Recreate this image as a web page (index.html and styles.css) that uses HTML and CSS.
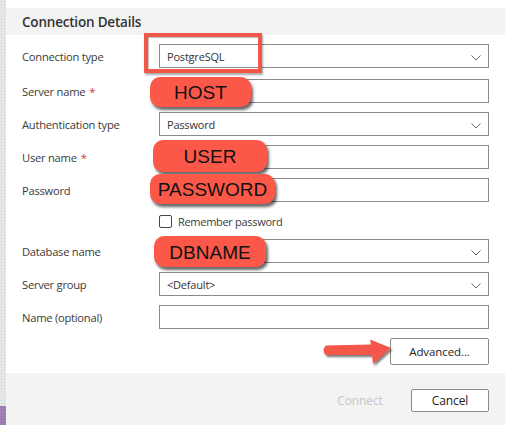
FILE: index.html
```html
<!DOCTYPE html>
<html>
<head>
<meta charset="utf-8">
<link rel="stylesheet" href="styles.css">
</head>
<body>
<div class="app">
  <div class="strip"><div class="strip-purple"></div></div>
  <div class="dialog">
    <div class="topgap"></div>
    <div class="header">Connection Details</div>
    <div class="body">
      <div class="form">
        <div class="label first">Connection type</div>
        <div class="field select first"><span>PostgreSQL</span><svg class="chev" width="10" height="6" viewBox="0 0 10 6"><path d="M0.5 0.5 L5 5 L9.5 0.5" fill="none" stroke="#666" stroke-width="1"/></svg></div>

        <div class="label">Server name <span class="req">*</span></div>
        <div class="field"></div>

        <div class="label">Authentication type</div>
        <div class="field select"><span>Password</span><svg class="chev" width="10" height="6" viewBox="0 0 10 6"><path d="M0.5 0.5 L5 5 L9.5 0.5" fill="none" stroke="#666" stroke-width="1"/></svg></div>

        <div class="label">User name <span class="req">*</span></div>
        <div class="field"></div>

        <div class="label">Password</div>
        <div class="field"></div>

        <div class="label"></div>
        <div class="check-row"><span class="checkbox"></span><span>Remember password</span></div>

        <div class="label">Database name</div>
        <div class="field select"><span></span><svg class="chev" width="10" height="6" viewBox="0 0 10 6"><path d="M0.5 0.5 L5 5 L9.5 0.5" fill="none" stroke="#666" stroke-width="1"/></svg></div>

        <div class="label">Server group</div>
        <div class="field select"><span>&lt;Default&gt;</span><svg class="chev" width="10" height="6" viewBox="0 0 10 6"><path d="M0.5 0.5 L5 5 L9.5 0.5" fill="none" stroke="#666" stroke-width="1"/></svg></div>

        <div class="label">Name (optional)</div>
        <div class="field"></div>
      </div>
      <div class="adv-row"><button class="btn adv">Advanced...</button></div>
    </div>
    <div class="footer">
      <button class="btn connect">Connect</button>
      <button class="btn cancel">Cancel</button>
    </div>
  </div>

  <div class="anno-rect"></div>
  <div class="pill pill-host">HOST</div>
  <div class="pill pill-user">USER</div>
  <div class="pill pill-pass">PASSWORD</div>
  <div class="pill pill-db">DBNAME</div>
  <svg class="arrow" width="80" height="32" viewBox="0 0 80 32">
    <defs>
      <filter id="sh" x="-20%" y="-30%" width="140%" height="170%">
        <feDropShadow dx="1.5" dy="2" stdDeviation="1.2" flood-color="#000" flood-opacity="0.55"/>
      </filter>
    </defs>
    <path filter="url(#sh)" d="M8 7.5 L53 6.5 L52 1.5 L73 10 L55 26 L54 17 L8 17 Q3 12.25 8 7.5 Z" fill="#f4574a"/>
  </svg>
</div>
</body>
</html>
```

FILE: styles.css
```css
* { box-sizing: border-box; }
html, body { margin: 0; padding: 0; background: #fff; }
body {
  font-family: "Open Sans", "Noto Sans", sans-serif;
  color: #333;
  width: 505px;
  height: 425px;
  overflow: hidden;
}
.app {
  position: relative;
  display: flex;
  width: 505px;
  height: 425px;
}
.strip {
  width: 6px;
  height: 425px;
  background-color: #e6e6e6;
  background-image: radial-gradient(#d6d6d6 0.6px, transparent 0.7px);
  background-size: 3px 3px;
  display: flex;
  flex-direction: column;
  justify-content: flex-end;
}
.strip-purple {
  height: 19px;
  background-color: #a081b3;
  background-image: radial-gradient(#8c6ba0 0.6px, transparent 0.7px);
  background-size: 3px 3px;
}
.dialog {
  flex: 1;
  display: flex;
  flex-direction: column;
}
.topgap { height: 8px; background: #fff; }
.header {
  height: 27px;
  background: #f3f3f3;
  padding: 2px 0 0 16px;
  font-size: 13.5px;
  font-weight: 600;
  line-height: 25px;
  color: #333;
  letter-spacing: -0.2px;
}
.body {
  background: #fff;
  padding: 9px 16px 8px 16px;
}
.form {
  display: grid;
  grid-template-columns: 137px 330px;
  grid-template-rows: 26px 24px 24px 24px 24px 19px 24px 24px 24px;
  row-gap: 9px;
}
.label {
  font-size: 11.2px;
  display: flex;
  align-items: center;
  color: #3a3a3a;
  letter-spacing: -0.25px;
  padding-top: 1px;
}
.label.first, .field.first { align-self: start; height: 24px; }
.req { color: #d13438; margin-left: 4px; }
.field {
  border: 1px solid #8a8a8a;
  height: 24px;
  display: flex;
  align-items: center;
  justify-content: space-between;
  padding: 0 7px 0 7px;
  font-size: 11px;
  color: #333;
  letter-spacing: -0.2px;
}
.chev { margin-top: 3px; }
.check-row {
  display: flex;
  align-items: center;
  gap: 6px;
  font-size: 11px;
  color: #3a3a3a;
  letter-spacing: -0.3px;
  padding-top: 2px;
}
.checkbox {
  width: 13px;
  height: 13px;
  border: 1px solid #444;
  border-radius: 2px;
  background: #fff;
}
.adv-row {
  display: flex;
  justify-content: flex-end;
  margin-top: 9px;
}
.btn {
  font-family: "Open Sans", "Noto Sans", sans-serif;
  font-size: 11.5px;
  color: #222;
  background: #fff;
  border: 1px solid #8a8a8a;
  border-radius: 2px;
  padding: 0;
  margin: 0;
  letter-spacing: -0.1px;
}
.adv { width: 99px; height: 27px; }
.footer {
  flex: 1;
  background: #f3f3f3;
  display: flex;
  justify-content: flex-end;
  align-items: flex-start;
  padding: 16px 16px 0 0;
  gap: 12px;
}
.connect {
  width: 78px;
  height: 23px;
  border-color: transparent;
  background: transparent;
  color: #c6c6c6;
  font-size: 12px;
}
.cancel { width: 78px; height: 23px; font-size: 12px; }

.anno-rect {
  position: absolute;
  left: 144px;
  top: 33px;
  width: 118px;
  height: 40px;
  border: 4px solid #f0584a;
  box-shadow: 1px 2px 2px rgba(0,0,0,0.35), inset 1px 1px 1px rgba(0,0,0,0.25);
}
.pill {
  position: absolute;
  background: #fb5849;
  border-radius: 10px;
  color: #111;
  font-family: "Liberation Sans", Arial, sans-serif;
  font-size: 19px;
  display: flex;
  align-items: center;
  justify-content: center;
  box-shadow: 2px 3px 3px rgba(0,0,0,0.6);
  padding-top: 2px;
}
.pill-host { left: 150px; top: 77px; width: 101px; height: 30px; }
.pill-user { left: 153px; top: 140px; width: 114px; height: 32px; }
.pill-pass { left: 150px; top: 174px; width: 125px; height: 30px; }
.pill-db { left: 154px; top: 236px; width: 112px; height: 31px; }
.arrow {
  position: absolute;
  left: 318px;
  top: 338px;
}
```
